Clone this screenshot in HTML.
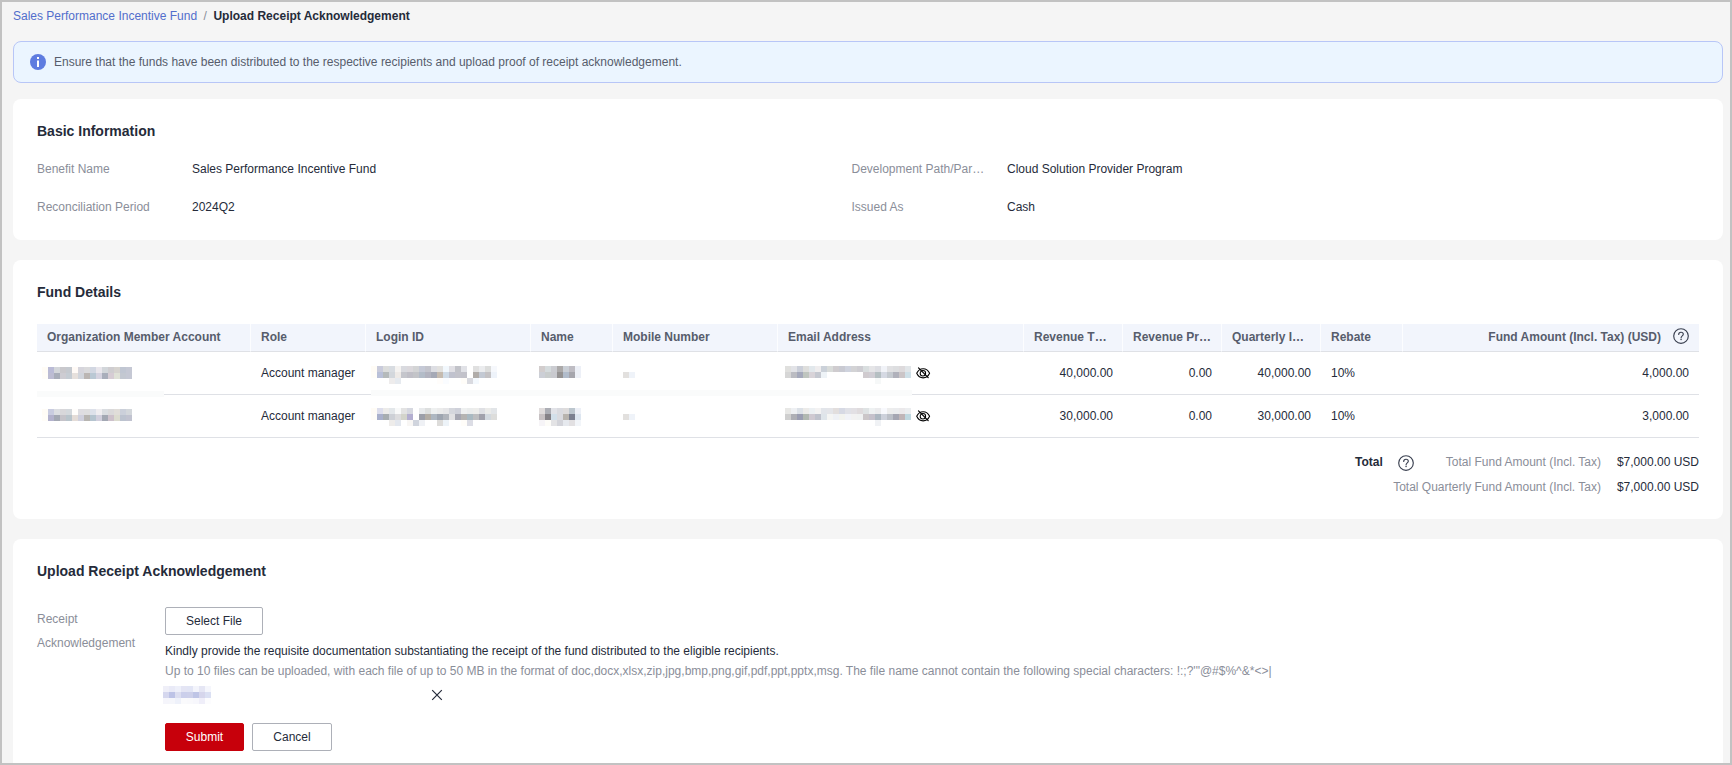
<!DOCTYPE html>
<html lang="en">
<head>
<meta charset="utf-8">
<title>Upload Receipt Acknowledgement</title>
<style>
*{box-sizing:border-box;margin:0;padding:0}
html,body{width:1732px;height:765px;overflow:hidden}
body{position:relative;background:#f5f5f5;font-family:"Liberation Sans",sans-serif;font-size:12px;color:#252b3a;line-height:20px}
.frame{position:absolute;left:0;top:0;width:1732px;height:765px;border:2px solid #c2c2c2;border-top-width:2px;pointer-events:none;z-index:10}
.abs{position:absolute;white-space:nowrap}
.crumb{left:13px;top:6px;height:20px;line-height:20px;font-size:12px}
.crumb a{color:#526ecc;text-decoration:none}
.crumb .sep{color:#8a8e99;margin:0 6.5px}
.crumb b{color:#252b3a;font-weight:700}
.alert{position:absolute;left:13px;top:41px;width:1710px;height:42px;background:#ebf5ff;border:1px solid #b8c6f7;border-radius:8px}
.alert svg{position:absolute;left:16px;top:12px}
.alert span{position:absolute;left:40px;top:10px;line-height:20px;color:#575d6c}
.card{position:absolute;left:13px;width:1710px;background:#fff;border-radius:8px}
.h{font-size:14px;font-weight:700;color:#252b3a;line-height:20px}
.lbl{color:#8a8e99}
.val{color:#252b3a}
table{position:absolute;left:24px;top:64px;width:1662px;border-collapse:separate;border-spacing:0;table-layout:fixed}
th{height:28px;background:#f2f5fc;color:#575d6c;font-weight:700;text-align:left;padding:0 10px 2px;border-bottom:1px solid #dfe1e6;border-right:1px solid #fcfdff;white-space:nowrap;overflow:hidden;font-size:12px;line-height:20px}
th:last-child{border-right:none}
th.r{padding-right:9px}
th.r:last-child{padding-right:10px}
.mosaic{position:absolute;left:0;top:0;z-index:5}
.ico{position:absolute;z-index:6}
td{height:43px;padding:0 10px;border-bottom:1px solid #dfe1e6;white-space:nowrap;font-size:12px;color:#252b3a;position:relative}
.r{text-align:right}
.btn{position:absolute;height:28px;border-radius:2px;font-size:12px;line-height:26px;text-align:center;border:1px solid #adb0b8;background:#fff;color:#252b3a}
.btn.red{background:#c7000b;border-color:#c7000b;color:#fff}
</style>
</head>
<body>
<div class="abs crumb"><a>Sales Performance Incentive Fund</a><span class="sep">/</span><b>Upload Receipt Acknowledgement</b></div>

<div class="alert">
<svg width="16" height="16" viewBox="0 0 16 16"><circle cx="8" cy="8" r="8" fill="#5e7ce0"/><rect x="7" y="3" width="2" height="2" fill="#fff"/><rect x="7" y="6.5" width="2" height="6.5" fill="#fff"/></svg>
<span>Ensure that the funds have been distributed to the respective recipients and upload proof of receipt acknowledgement.</span>
</div>

<div class="card" style="top:99px;height:141px">
  <div class="abs h" style="left:24px;top:22px">Basic Information</div>
  <div class="abs lbl" style="left:24px;top:60px">Benefit Name</div>
  <div class="abs val" style="left:179px;top:60px">Sales Performance Incentive Fund</div>
  <div class="abs lbl" style="left:838.5px;top:60px">Development Path/Par…</div>
  <div class="abs val" style="left:994px;top:60px">Cloud Solution Provider Program</div>
  <div class="abs lbl" style="left:24px;top:98px">Reconciliation Period</div>
  <div class="abs val" style="left:179px;top:98px">2024Q2</div>
  <div class="abs lbl" style="left:838.5px;top:98px">Issued As</div>
  <div class="abs val" style="left:994px;top:98px">Cash</div>
</div>

<div class="card" style="top:260px;height:259px">
  <div class="abs h" style="left:24px;top:22px">Fund Details</div>
  <table>
  <colgroup><col style="width:214px"><col style="width:115px"><col style="width:165px"><col style="width:82px"><col style="width:165px"><col style="width:246px"><col style="width:99px"><col style="width:99px"><col style="width:99px"><col style="width:82px"><col style="width:296px"></colgroup>
  <thead><tr>
    <th>Organization Member Account</th><th>Role</th><th>Login ID</th><th>Name</th><th>Mobile Number</th><th>Email Address</th><th>Revenue T…</th><th>Revenue Pr…</th><th>Quarterly I…</th><th>Rebate</th><th class="r">Fund Amount (Incl. Tax) (USD)<span style="display:inline-block;width:28px"></span></th>
  </tr></thead>
  <tbody>
  <tr><td></td><td>Account manager</td><td></td><td></td><td></td><td></td><td class="r">40,000.00</td><td class="r">0.00</td><td class="r">40,000.00</td><td>10%</td><td class="r">4,000.00</td></tr>
  <tr><td></td><td>Account manager</td><td></td><td></td><td></td><td></td><td class="r">30,000.00</td><td class="r">0.00</td><td class="r">30,000.00</td><td>10%</td><td class="r">3,000.00</td></tr>
  </tbody>
  </table>
  <div class="abs" style="left:1342px;top:192px;font-weight:700">Total</div>
  <div class="abs lbl" style="right:122px;top:192px">Total Fund Amount (Incl. Tax)</div>
  <div class="abs val" style="right:24px;top:192px">$7,000.00 USD</div>
  <div class="abs lbl" style="right:122px;top:217px">Total Quarterly Fund Amount (Incl. Tax)</div>
  <div class="abs val" style="right:24px;top:217px">$7,000.00 USD</div>
</div>

<div class="card" style="top:539px;height:240px">
  <div class="abs h" style="left:24px;top:22px">Upload Receipt Acknowledgement</div>
  <div class="abs lbl" style="left:24px;top:68px;line-height:24px">Receipt<br>Acknowledgement</div>
  <div class="btn" style="left:152px;top:68px;width:98px">Select File</div>
  <div class="abs val" style="left:152px;top:102px">Kindly provide the requisite documentation substantiating the receipt of the fund distributed to the eligible recipients.</div>
  <div class="abs lbl" style="left:152px;top:122px">Up to 10 files can be uploaded, with each file of up to 50 MB in the format of doc,docx,xlsx,zip,jpg,bmp,png,gif,pdf,ppt,pptx,msg. The file name cannot contain the following special characters: !:;?'"@#$%^&amp;*&lt;&gt;|</div>
  <div class="btn red" style="left:152px;top:184px;width:79px">Submit</div>
  <div class="btn" style="left:239px;top:184px;width:80px">Cancel</div>
</div>

<!--MOSAIC-->
<svg class="mosaic" width="1732" height="765" viewBox="0 0 1732 765" shape-rendering="crispEdges">
<rect x="48" y="367" width="6" height="6" fill="#babbd6"/>
<rect x="54" y="367" width="6" height="6" fill="#d3d6da"/>
<rect x="60" y="367" width="6" height="6" fill="#c9c8cc"/>
<rect x="66" y="367" width="6" height="6" fill="#c5c9cf"/>
<rect x="72" y="367" width="6" height="6" fill="#fffaf6"/>
<rect x="78" y="367" width="6" height="6" fill="#d6d5dc"/>
<rect x="84" y="367" width="6" height="6" fill="#dadadc"/>
<rect x="90" y="367" width="6" height="6" fill="#d2d7e2"/>
<rect x="96" y="367" width="6" height="6" fill="#e9e6ec"/>
<rect x="102" y="367" width="6" height="6" fill="#d2d6da"/>
<rect x="108" y="367" width="6" height="6" fill="#cfcdd0"/>
<rect x="114" y="367" width="6" height="6" fill="#d6d3cf"/>
<rect x="120" y="367" width="6" height="6" fill="#c0c6d2"/>
<rect x="126" y="367" width="6" height="6" fill="#c5c8d4"/>
<rect x="48" y="373" width="6" height="6" fill="#bcbcd2"/>
<rect x="54" y="373" width="6" height="6" fill="#a8adb9"/>
<rect x="60" y="373" width="6" height="6" fill="#cdccd2"/>
<rect x="66" y="373" width="6" height="6" fill="#c5ccd3"/>
<rect x="72" y="373" width="6" height="6" fill="#e6e0dc"/>
<rect x="78" y="373" width="6" height="6" fill="#d1d5dc"/>
<rect x="84" y="373" width="6" height="6" fill="#bbb6b3"/>
<rect x="90" y="373" width="6" height="6" fill="#bac8d4"/>
<rect x="96" y="373" width="6" height="6" fill="#d5d3e0"/>
<rect x="102" y="373" width="6" height="6" fill="#a9aebb"/>
<rect x="108" y="373" width="6" height="6" fill="#d6ccd4"/>
<rect x="114" y="373" width="6" height="6" fill="#dfe1d7"/>
<rect x="120" y="373" width="6" height="6" fill="#c3c8d1"/>
<rect x="126" y="373" width="6" height="6" fill="#c5c8d4"/>
<rect x="48" y="409" width="6" height="6" fill="#c9cce0"/>
<rect x="54" y="409" width="6" height="6" fill="#dcdee2"/>
<rect x="60" y="409" width="6" height="6" fill="#d8d7da"/>
<rect x="66" y="409" width="6" height="6" fill="#d4d8dc"/>
<rect x="72" y="409" width="6" height="6" fill="#fffdfb"/>
<rect x="78" y="409" width="6" height="6" fill="#dedde1"/>
<rect x="84" y="409" width="6" height="6" fill="#dededf"/>
<rect x="90" y="409" width="6" height="6" fill="#dde1ea"/>
<rect x="96" y="409" width="6" height="6" fill="#efedf0"/>
<rect x="102" y="409" width="6" height="6" fill="#dadde1"/>
<rect x="108" y="409" width="6" height="6" fill="#dad9da"/>
<rect x="114" y="409" width="6" height="6" fill="#e0ddd9"/>
<rect x="120" y="409" width="6" height="6" fill="#cbd0da"/>
<rect x="126" y="409" width="6" height="6" fill="#d3d7db"/>
<rect x="48" y="415" width="6" height="6" fill="#b3b2cd"/>
<rect x="54" y="415" width="6" height="6" fill="#a3a8b3"/>
<rect x="60" y="415" width="6" height="6" fill="#c5c3c9"/>
<rect x="66" y="415" width="6" height="6" fill="#b9c4cb"/>
<rect x="72" y="415" width="6" height="6" fill="#e4dcd7"/>
<rect x="78" y="415" width="6" height="6" fill="#cfd0dd"/>
<rect x="84" y="415" width="6" height="6" fill="#b7b5b1"/>
<rect x="90" y="415" width="6" height="6" fill="#b5c4cf"/>
<rect x="96" y="415" width="6" height="6" fill="#d1cfdd"/>
<rect x="102" y="415" width="6" height="6" fill="#a3a8b3"/>
<rect x="108" y="415" width="6" height="6" fill="#cdc1cb"/>
<rect x="114" y="415" width="6" height="6" fill="#dbdbcf"/>
<rect x="120" y="415" width="6" height="6" fill="#bcc3cf"/>
<rect x="126" y="415" width="6" height="6" fill="#c1c3d0"/>
<rect x="42" y="367" width="6" height="6" fill="#fffcf6"/>
<rect x="42" y="373" width="6" height="6" fill="#fffdf8"/>
<rect x="42" y="409" width="6" height="6" fill="#fffcf6"/>
<rect x="42" y="415" width="6" height="6" fill="#fffdf8"/>
<rect x="377" y="366" width="6" height="6" fill="#c9cbdb"/>
<rect x="383" y="366" width="6" height="6" fill="#dcdddc"/>
<rect x="389" y="366" width="6" height="6" fill="#d8dce1"/>
<rect x="395" y="366" width="6" height="6" fill="#f5f3f1"/>
<rect x="401" y="366" width="6" height="6" fill="#d9dadf"/>
<rect x="407" y="366" width="6" height="6" fill="#dbd8dc"/>
<rect x="413" y="366" width="6" height="6" fill="#d3d4d5"/>
<rect x="419" y="366" width="6" height="6" fill="#c5c9d6"/>
<rect x="425" y="366" width="6" height="6" fill="#c3c4cc"/>
<rect x="431" y="366" width="6" height="6" fill="#dddee3"/>
<rect x="437" y="366" width="6" height="6" fill="#e2e1df"/>
<rect x="443" y="366" width="6" height="6" fill="#f2f8fd"/>
<rect x="449" y="366" width="6" height="6" fill="#e1e0e5"/>
<rect x="455" y="366" width="6" height="6" fill="#c2c3c9"/>
<rect x="461" y="366" width="6" height="6" fill="#e1e2e7"/>
<rect x="473" y="366" width="6" height="6" fill="#e0e0e0"/>
<rect x="479" y="366" width="6" height="6" fill="#ebecee"/>
<rect x="485" y="366" width="6" height="6" fill="#dcdddc"/>
<rect x="491" y="366" width="6" height="6" fill="#f6f8fc"/>
<rect x="377" y="372" width="6" height="6" fill="#b9c0d8"/>
<rect x="383" y="372" width="6" height="6" fill="#b5babb"/>
<rect x="389" y="372" width="6" height="6" fill="#d3d7dc"/>
<rect x="395" y="372" width="6" height="6" fill="#eeeae7"/>
<rect x="401" y="372" width="6" height="6" fill="#c5c6cc"/>
<rect x="407" y="372" width="6" height="6" fill="#c0bfc7"/>
<rect x="413" y="372" width="6" height="6" fill="#c3c4c8"/>
<rect x="419" y="372" width="6" height="6" fill="#b3bcc8"/>
<rect x="425" y="372" width="6" height="6" fill="#b2b3bf"/>
<rect x="431" y="372" width="6" height="6" fill="#a5a9b6"/>
<rect x="437" y="372" width="6" height="6" fill="#c5bbb0"/>
<rect x="443" y="372" width="6" height="6" fill="#cfdbe7"/>
<rect x="449" y="372" width="6" height="6" fill="#c0c2ce"/>
<rect x="455" y="372" width="6" height="6" fill="#c3c3cb"/>
<rect x="461" y="372" width="6" height="6" fill="#c2c2ca"/>
<rect x="473" y="372" width="6" height="6" fill="#b0aca9"/>
<rect x="479" y="372" width="6" height="6" fill="#c3c9d3"/>
<rect x="485" y="372" width="6" height="6" fill="#c4c2c4"/>
<rect x="491" y="372" width="6" height="6" fill="#eef3fa"/>
<rect x="389" y="378" width="6" height="6" fill="#eeecec"/>
<rect x="395" y="378" width="6" height="6" fill="#e6eaef"/>
<rect x="437" y="378" width="6" height="6" fill="#fffdfb"/>
<rect x="443" y="378" width="6" height="6" fill="#fafcff"/>
<rect x="461" y="378" width="6" height="6" fill="#fffdf9"/>
<rect x="467" y="378" width="6" height="6" fill="#d9dae0"/>
<rect x="473" y="378" width="6" height="6" fill="#f4f9fe"/>
<rect x="371" y="366" width="6" height="6" fill="#fffcf6"/>
<rect x="371" y="372" width="6" height="6" fill="#fffdf8"/>
<rect x="377" y="408" width="6" height="6" fill="#dddeec"/>
<rect x="383" y="408" width="6" height="6" fill="#ecebe9"/>
<rect x="389" y="408" width="6" height="6" fill="#e3e7ea"/>
<rect x="395" y="408" width="6" height="6" fill="#f8f9f9"/>
<rect x="401" y="408" width="6" height="6" fill="#e3e3e3"/>
<rect x="407" y="408" width="6" height="6" fill="#d6d8e0"/>
<rect x="419" y="408" width="6" height="6" fill="#e8eaec"/>
<rect x="425" y="408" width="6" height="6" fill="#dddfdf"/>
<rect x="431" y="408" width="6" height="6" fill="#eef0f0"/>
<rect x="437" y="408" width="6" height="6" fill="#ebebeb"/>
<rect x="443" y="408" width="6" height="6" fill="#e6e6e8"/>
<rect x="449" y="408" width="6" height="6" fill="#d5d7dd"/>
<rect x="455" y="408" width="6" height="6" fill="#cfd1da"/>
<rect x="461" y="408" width="6" height="6" fill="#eef0f0"/>
<rect x="467" y="408" width="6" height="6" fill="#eaecec"/>
<rect x="473" y="408" width="6" height="6" fill="#ededeb"/>
<rect x="479" y="408" width="6" height="6" fill="#dfe0e4"/>
<rect x="485" y="408" width="6" height="6" fill="#ebebe9"/>
<rect x="491" y="408" width="6" height="6" fill="#e2e5e8"/>
<rect x="377" y="414" width="6" height="6" fill="#a9b0cb"/>
<rect x="383" y="414" width="6" height="6" fill="#a7adb0"/>
<rect x="389" y="414" width="6" height="6" fill="#cdd0d6"/>
<rect x="395" y="414" width="6" height="6" fill="#dcdcde"/>
<rect x="401" y="414" width="6" height="6" fill="#d3d4cb"/>
<rect x="407" y="414" width="6" height="6" fill="#b3aed0"/>
<rect x="419" y="414" width="6" height="6" fill="#9c9fa9"/>
<rect x="425" y="414" width="6" height="6" fill="#b3ada5"/>
<rect x="431" y="414" width="6" height="6" fill="#aeb7c1"/>
<rect x="437" y="414" width="6" height="6" fill="#9ea5b0"/>
<rect x="443" y="414" width="6" height="6" fill="#b1b5bc"/>
<rect x="449" y="414" width="6" height="6" fill="#e1e1e3"/>
<rect x="455" y="414" width="6" height="6" fill="#a6a7b2"/>
<rect x="461" y="414" width="6" height="6" fill="#b5b4b2"/>
<rect x="467" y="414" width="6" height="6" fill="#a9b9c1"/>
<rect x="473" y="414" width="6" height="6" fill="#bdbec0"/>
<rect x="479" y="414" width="6" height="6" fill="#a1a1ab"/>
<rect x="485" y="414" width="6" height="6" fill="#d3d9df"/>
<rect x="491" y="414" width="6" height="6" fill="#dddddb"/>
<rect x="389" y="420" width="6" height="6" fill="#eeecea"/>
<rect x="395" y="420" width="6" height="6" fill="#e3e7ee"/>
<rect x="407" y="420" width="6" height="6" fill="#f8f6f4"/>
<rect x="413" y="420" width="6" height="6" fill="#d0d4dd"/>
<rect x="419" y="420" width="6" height="6" fill="#eff1f5"/>
<rect x="437" y="420" width="6" height="6" fill="#dddcda"/>
<rect x="443" y="420" width="6" height="6" fill="#edf3f8"/>
<rect x="461" y="420" width="6" height="6" fill="#fffdf9"/>
<rect x="467" y="420" width="6" height="6" fill="#dcdde5"/>
<rect x="371" y="408" width="6" height="6" fill="#fffcf6"/>
<rect x="371" y="414" width="6" height="6" fill="#fffdf8"/>
<rect x="539" y="366" width="6" height="6" fill="#d2cdcd"/>
<rect x="545" y="366" width="6" height="6" fill="#d5dbdd"/>
<rect x="551" y="366" width="6" height="6" fill="#cbccd1"/>
<rect x="557" y="366" width="6" height="6" fill="#aba9a9"/>
<rect x="563" y="366" width="6" height="6" fill="#cacfd6"/>
<rect x="569" y="366" width="6" height="6" fill="#bebcc3"/>
<rect x="575" y="366" width="6" height="6" fill="#edf0f7"/>
<rect x="539" y="372" width="6" height="6" fill="#cccfd6"/>
<rect x="545" y="372" width="6" height="6" fill="#c9cdcd"/>
<rect x="551" y="372" width="6" height="6" fill="#c9cacf"/>
<rect x="557" y="372" width="6" height="6" fill="#959393"/>
<rect x="563" y="372" width="6" height="6" fill="#b1bccb"/>
<rect x="569" y="372" width="6" height="6" fill="#a6a6ad"/>
<rect x="575" y="372" width="6" height="6" fill="#edf0f7"/>
<rect x="539" y="408" width="6" height="6" fill="#e0dcdc"/>
<rect x="545" y="408" width="6" height="6" fill="#acaeb5"/>
<rect x="551" y="408" width="6" height="6" fill="#e2e3e8"/>
<rect x="557" y="408" width="6" height="6" fill="#dadbe0"/>
<rect x="563" y="408" width="6" height="6" fill="#dedcdc"/>
<rect x="569" y="408" width="6" height="6" fill="#bcc6ce"/>
<rect x="575" y="408" width="6" height="6" fill="#edf0f7"/>
<rect x="539" y="414" width="6" height="6" fill="#c7c1c3"/>
<rect x="545" y="414" width="6" height="6" fill="#858287"/>
<rect x="551" y="414" width="6" height="6" fill="#d3e0ea"/>
<rect x="557" y="414" width="6" height="6" fill="#dadbe0"/>
<rect x="563" y="414" width="6" height="6" fill="#b8b4ae"/>
<rect x="569" y="414" width="6" height="6" fill="#7b8090"/>
<rect x="575" y="414" width="6" height="6" fill="#dde6f0"/>
<rect x="539" y="420" width="6" height="6" fill="#f6f4f7"/>
<rect x="545" y="420" width="6" height="6" fill="#fdfcf8"/>
<rect x="551" y="420" width="6" height="6" fill="#e3e3e5"/>
<rect x="557" y="420" width="6" height="6" fill="#d3d4da"/>
<rect x="563" y="420" width="6" height="6" fill="#e6e9ee"/>
<rect x="569" y="420" width="6" height="6" fill="#e2e0e2"/>
<rect x="575" y="420" width="6" height="6" fill="#f2f5f9"/>
<rect x="623" y="372" width="6" height="6" fill="#e2e0de"/>
<rect x="629" y="372" width="6" height="6" fill="#eff3f9"/>
<rect x="623" y="414" width="6" height="6" fill="#e2e0de"/>
<rect x="629" y="414" width="6" height="6" fill="#eff3f9"/>
<rect x="785" y="366" width="6" height="6" fill="#e0e0de"/>
<rect x="791" y="366" width="6" height="6" fill="#e2e3e7"/>
<rect x="797" y="366" width="6" height="6" fill="#cbcfd9"/>
<rect x="803" y="366" width="6" height="6" fill="#dededc"/>
<rect x="809" y="366" width="6" height="6" fill="#e2e8ec"/>
<rect x="815" y="366" width="6" height="6" fill="#efedee"/>
<rect x="821" y="366" width="6" height="6" fill="#cbd1d9"/>
<rect x="827" y="366" width="6" height="6" fill="#d9dcda"/>
<rect x="833" y="366" width="6" height="6" fill="#cfcccf"/>
<rect x="839" y="366" width="6" height="6" fill="#c9cad2"/>
<rect x="845" y="366" width="6" height="6" fill="#cfd3de"/>
<rect x="851" y="366" width="6" height="6" fill="#d3d3d5"/>
<rect x="857" y="366" width="6" height="6" fill="#cecdd2"/>
<rect x="863" y="366" width="6" height="6" fill="#d9dedf"/>
<rect x="869" y="366" width="6" height="6" fill="#e5e5e7"/>
<rect x="875" y="366" width="6" height="6" fill="#dddee3"/>
<rect x="881" y="366" width="6" height="6" fill="#f1f3f8"/>
<rect x="887" y="366" width="6" height="6" fill="#e1e1e3"/>
<rect x="893" y="366" width="6" height="6" fill="#dddee0"/>
<rect x="899" y="366" width="6" height="6" fill="#dddadc"/>
<rect x="905" y="366" width="6" height="6" fill="#e2e6e9"/>
<rect x="785" y="372" width="6" height="6" fill="#d6d6d6"/>
<rect x="791" y="372" width="6" height="6" fill="#bbbcc2"/>
<rect x="797" y="372" width="6" height="6" fill="#a5a9bb"/>
<rect x="803" y="372" width="6" height="6" fill="#bfc5bf"/>
<rect x="809" y="372" width="6" height="6" fill="#d8d3d8"/>
<rect x="815" y="372" width="6" height="6" fill="#c5c8d0"/>
<rect x="821" y="372" width="6" height="6" fill="#eef3f7"/>
<rect x="863" y="372" width="6" height="6" fill="#d0cbcf"/>
<rect x="869" y="372" width="6" height="6" fill="#d0cdd4"/>
<rect x="875" y="372" width="6" height="6" fill="#b5bfc2"/>
<rect x="881" y="372" width="6" height="6" fill="#d5d9e3"/>
<rect x="887" y="372" width="6" height="6" fill="#c5cad0"/>
<rect x="893" y="372" width="6" height="6" fill="#b0b1bb"/>
<rect x="899" y="372" width="6" height="6" fill="#cbc5c7"/>
<rect x="905" y="372" width="6" height="6" fill="#cfe0e8"/>
<rect x="875" y="378" width="6" height="6" fill="#f6f8f8"/>
<rect x="785" y="408" width="6" height="6" fill="#e8e8e6"/>
<rect x="791" y="408" width="6" height="6" fill="#eef0f3"/>
<rect x="797" y="408" width="6" height="6" fill="#dce1e7"/>
<rect x="803" y="408" width="6" height="6" fill="#ecebe9"/>
<rect x="809" y="408" width="6" height="6" fill="#ecf0f3"/>
<rect x="815" y="408" width="6" height="6" fill="#f3f2f2"/>
<rect x="821" y="408" width="6" height="6" fill="#e2e5ea"/>
<rect x="827" y="408" width="6" height="6" fill="#e4e5e9"/>
<rect x="833" y="408" width="6" height="6" fill="#e2dedd"/>
<rect x="839" y="408" width="6" height="6" fill="#d6d9e4"/>
<rect x="845" y="408" width="6" height="6" fill="#e0e1e7"/>
<rect x="851" y="408" width="6" height="6" fill="#e2e0e4"/>
<rect x="857" y="408" width="6" height="6" fill="#dfdbdd"/>
<rect x="863" y="408" width="6" height="6" fill="#dfe3e4"/>
<rect x="869" y="408" width="6" height="6" fill="#eef1f2"/>
<rect x="875" y="408" width="6" height="6" fill="#ebebed"/>
<rect x="881" y="408" width="6" height="6" fill="#f8f9fd"/>
<rect x="887" y="408" width="6" height="6" fill="#ededed"/>
<rect x="893" y="408" width="6" height="6" fill="#ebecee"/>
<rect x="899" y="408" width="6" height="6" fill="#ebe9eb"/>
<rect x="905" y="408" width="6" height="6" fill="#eceef0"/>
<rect x="785" y="414" width="6" height="6" fill="#cfcfcf"/>
<rect x="791" y="414" width="6" height="6" fill="#aeafb5"/>
<rect x="797" y="414" width="6" height="6" fill="#9a9db1"/>
<rect x="803" y="414" width="6" height="6" fill="#b1b8b1"/>
<rect x="809" y="414" width="6" height="6" fill="#cfc9d1"/>
<rect x="815" y="414" width="6" height="6" fill="#bfc2cc"/>
<rect x="821" y="414" width="6" height="6" fill="#dfe5ea"/>
<rect x="827" y="414" width="6" height="6" fill="#f5f5f3"/>
<rect x="833" y="414" width="6" height="6" fill="#eff1f5"/>
<rect x="839" y="414" width="6" height="6" fill="#f2f3ef"/>
<rect x="845" y="414" width="6" height="6" fill="#f1f3f8"/>
<rect x="851" y="414" width="6" height="6" fill="#f2f2f2"/>
<rect x="857" y="414" width="6" height="6" fill="#f0f2f2"/>
<rect x="863" y="414" width="6" height="6" fill="#cbc6c8"/>
<rect x="869" y="414" width="6" height="6" fill="#c5c1cb"/>
<rect x="875" y="414" width="6" height="6" fill="#adb7c1"/>
<rect x="881" y="414" width="6" height="6" fill="#cdd1db"/>
<rect x="887" y="414" width="6" height="6" fill="#bcc0c8"/>
<rect x="893" y="414" width="6" height="6" fill="#a5a6b2"/>
<rect x="899" y="414" width="6" height="6" fill="#c0b5b7"/>
<rect x="905" y="414" width="6" height="6" fill="#c0d8e0"/>
<rect x="875" y="420" width="6" height="6" fill="#f0f2f5"/>
<rect x="37" y="391" width="127" height="6" fill="#fafbfb"/>
<rect x="371" y="390" width="541" height="6" fill="#fafbfb"/>
<rect x="163" y="686" width="6" height="6" fill="#efeff8"/>
<rect x="169" y="686" width="6" height="6" fill="#e9eaf7"/>
<rect x="175" y="686" width="6" height="6" fill="#eef0fa"/>
<rect x="181" y="686" width="6" height="6" fill="#e4e5f4"/>
<rect x="187" y="686" width="6" height="6" fill="#e2e5f5"/>
<rect x="193" y="686" width="6" height="6" fill="#f3f4fb"/>
<rect x="199" y="686" width="6" height="6" fill="#e5e6f4"/>
<rect x="205" y="686" width="6" height="6" fill="#f5f6fc"/>
<rect x="163" y="692" width="6" height="6" fill="#d5d7ee"/>
<rect x="169" y="692" width="6" height="6" fill="#bdc3e6"/>
<rect x="175" y="692" width="6" height="6" fill="#dcdef0"/>
<rect x="181" y="692" width="6" height="6" fill="#cbcfeb"/>
<rect x="187" y="692" width="6" height="6" fill="#cdd0ea"/>
<rect x="193" y="692" width="6" height="6" fill="#bfc5e6"/>
<rect x="199" y="692" width="6" height="6" fill="#d6d6ec"/>
<rect x="205" y="692" width="6" height="6" fill="#dbe0f3"/>
<rect x="163" y="698" width="6" height="6" fill="#f5f5fb"/>
<rect x="169" y="698" width="6" height="6" fill="#f5f6fb"/>
<rect x="175" y="698" width="6" height="6" fill="#eef1fa"/>
<rect x="181" y="698" width="6" height="6" fill="#fafafc"/>
<rect x="187" y="698" width="6" height="6" fill="#f9f9fc"/>
<rect x="193" y="698" width="6" height="6" fill="#f7f7fc"/>
<rect x="199" y="698" width="6" height="6" fill="#efeef9"/>
<rect x="205" y="698" width="6" height="6" fill="#fcfcfe"/>
</svg>
<svg class="ico" style="left:1673px;top:328px" width="16" height="16" viewBox="0 0 16 16" fill="none" stroke="#3a4050" stroke-width="1.15"><circle cx="8" cy="8" r="7.3"/><path d="M5.7 6.5C5.7 5 6.7 4.2 8 4.2c1.3 0 2.3.8 2.3 2 0 1.7-2.2 1.7-2.2 3.6" stroke-linecap="round"/><circle cx="8.05" cy="11.6" r=".75" fill="#3a4050" stroke="none"/></svg>
<svg class="ico" style="left:1398px;top:455px" width="16" height="16" viewBox="0 0 16 16" fill="none" stroke="#3a4050" stroke-width="1.15"><circle cx="8" cy="8" r="7.3"/><path d="M5.7 6.5C5.7 5 6.7 4.2 8 4.2c1.3 0 2.3.8 2.3 2 0 1.7-2.2 1.7-2.2 3.6" stroke-linecap="round"/><circle cx="8.05" cy="11.6" r=".75" fill="#3a4050" stroke="none"/></svg>
<svg class="ico" style="left:915px;top:367px" width="16" height="12" viewBox="0 0 16 12" fill="none" stroke="#000" stroke-width="1.05" stroke-linecap="round" stroke-linejoin="round"><path d="M1.7 6.3C4.5 .2 11.8 .2 14.6 6.3C11.8 12.4 4.5 12.4 1.7 6.3Z"/><circle cx="7.9" cy="6.2" r="2.7"/><path d="M3.5 .9L13.2 10.7" stroke-width="1.15"/></svg>
<svg class="ico" style="left:915px;top:410px" width="16" height="12" viewBox="0 0 16 12" fill="none" stroke="#000" stroke-width="1.05" stroke-linecap="round" stroke-linejoin="round"><path d="M1.7 6.3C4.5 .2 11.8 .2 14.6 6.3C11.8 12.4 4.5 12.4 1.7 6.3Z"/><circle cx="7.9" cy="6.2" r="2.7"/><path d="M3.5 .9L13.2 10.7" stroke-width="1.15"/></svg>
<svg class="ico" style="left:431px;top:689px" width="12" height="12" viewBox="0 0 12 12" fill="none" stroke="#252b3a" stroke-width="1.2"><path d="M1.2 1.2l9.6 9.6M10.8 1.2l-9.6 9.6"/></svg>
<!--/MOSAIC-->
<div class="frame"></div>
</body>
</html>
